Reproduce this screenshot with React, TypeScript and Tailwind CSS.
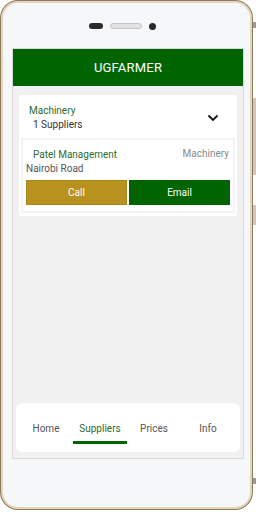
import React from "react";

export default function App() {
  const font = { fontFamily: "Roboto, 'Liberation Sans', sans-serif" };
  return (
    <div className="relative w-[256px] h-[512px] bg-white overflow-hidden" style={font}>
      {/* side buttons */}
      <div className="absolute left-0 top-[22px] w-[3px] h-[6px] bg-[#9a9a9a]" />
      <div className="absolute left-0 top-[478px] w-[3px] h-[6px] bg-[#9a9a9a]" />
      <div className="absolute left-[251px] top-[22px] w-[5px] h-[6px] bg-[#9a9a9a]" />
      <div className="absolute left-[252px] top-[98px] w-[4px] h-[77px] bg-[#cfc7bd]" />
      <div className="absolute left-[252px] top-[205px] w-[4px] h-[20px] bg-[#cfc7bd]" />
      <div className="absolute left-[251px] top-[478px] w-[5px] h-[6px] bg-[#9a9a9a]" />

      {/* phone */}
      <div className="relative w-[253px] h-[510px] rounded-[18px] bg-[#8f7a5e] p-[1px]">
        <div className="w-full h-full rounded-[17px] bg-[#e4d5bf] p-[2px]">
          <div className="w-full h-full rounded-[15px] bg-[#f5f7f9] flex flex-col">
            {/* top sensors */}
            <div className="h-[45px] flex items-start justify-center pt-[20px] gap-[7px] pr-[9px]">
              <div className="w-[14px] h-[6px] rounded-full bg-[#2a2a2a]" />
              <div className="w-[32px] h-[6px] rounded-full bg-[#e2e2e2] border border-[#c6c6c6]" />
              <div className="w-[7px] h-[7px] rounded-full bg-[#2b2b2b] -mt-[0.5px]" />
            </div>

            {/* screen */}
            <div className="ml-[9px] w-[232px] h-[411px] border border-[#d9d9d9] bg-[#f1f1f1] flex flex-col">
              <div className="h-[37px] bg-[#006400] flex items-center justify-center text-white text-[13px] tracking-[0.2px]">
                UGFARMER
              </div>

              <div className="flex-1 px-[6px] pt-[9px] flex flex-col">
                {/* accordion */}
                <div className="bg-white px-[2px] pb-[3px]">
                  <div className="h-[43px] flex items-center justify-between pl-[8px] pr-[16px]">
                    <div className="flex flex-col text-[10px] leading-[14px] mt-[3px]">
                      <span className="text-[#2e6b2e]">Machinery</span>
                      <span className="text-[#333] pl-[4px]">1 Suppliers</span>
                    </div>
                    <svg width="12" height="8" viewBox="0 0 12 8" className="mt-[3px]">
                      <path d="M1.5 1.5 L6 6 L10.5 1.5" fill="none" stroke="#111" strokeWidth="1.8" />
                    </svg>
                  </div>
                  <div className="bg-[#f4f4f4] p-[2px]">
                    <div className="bg-white px-[3px] pt-[8px] pb-[6px]">
                      <div className="flex justify-between items-start">
                        <div className="flex flex-col">
                          <span className="text-[10px] leading-[14px] text-[#2e6b2e] pl-[7px]">Patel Management</span>
                          <span className="text-[10px] leading-[14px] text-[#555]">Nairobi Road</span>
                        </div>
                        <span className="text-[10px] leading-[12px] text-[#888] pr-[1px]">Machinery</span>
                      </div>
                      <div className="flex gap-[2px] mt-[4px]">
                        <div className="w-[102px] h-[25px] bg-[#b8921e] border border-[#a8841a] text-white text-[10px] flex items-center justify-center">
                          Call
                        </div>
                        <div className="w-[102px] h-[25px] bg-[#006400] text-white text-[10px] flex items-center justify-center">
                          Email
                        </div>
                      </div>
                    </div>
                  </div>
                </div>

                <div className="flex-1" />

                {/* bottom nav */}
                <div className="-mx-[3px] mb-[6px] h-[49px] bg-white rounded-[6px] pl-[3px] flex">
                  {[
                    { t: "Home", a: false },
                    { t: "Suppliers", a: true },
                    { t: "Prices", a: false },
                    { t: "Info", a: false },
                  ].map((it) => (
                    <div key={it.t} className="w-[54px] flex flex-col items-center pt-[20px]">
                      <span className={`text-[10px] leading-[12px] ${it.a ? "text-[#2e6b2e]" : "text-[#555]"}`}>{it.t}</span>
                      {it.a ? <div className="mt-[6px] w-[54px] h-[3px] bg-[#006400]" /> : null}
                    </div>
                  ))}
                </div>
              </div>
            </div>
          </div>
        </div>
      </div>
    </div>
  );
}
